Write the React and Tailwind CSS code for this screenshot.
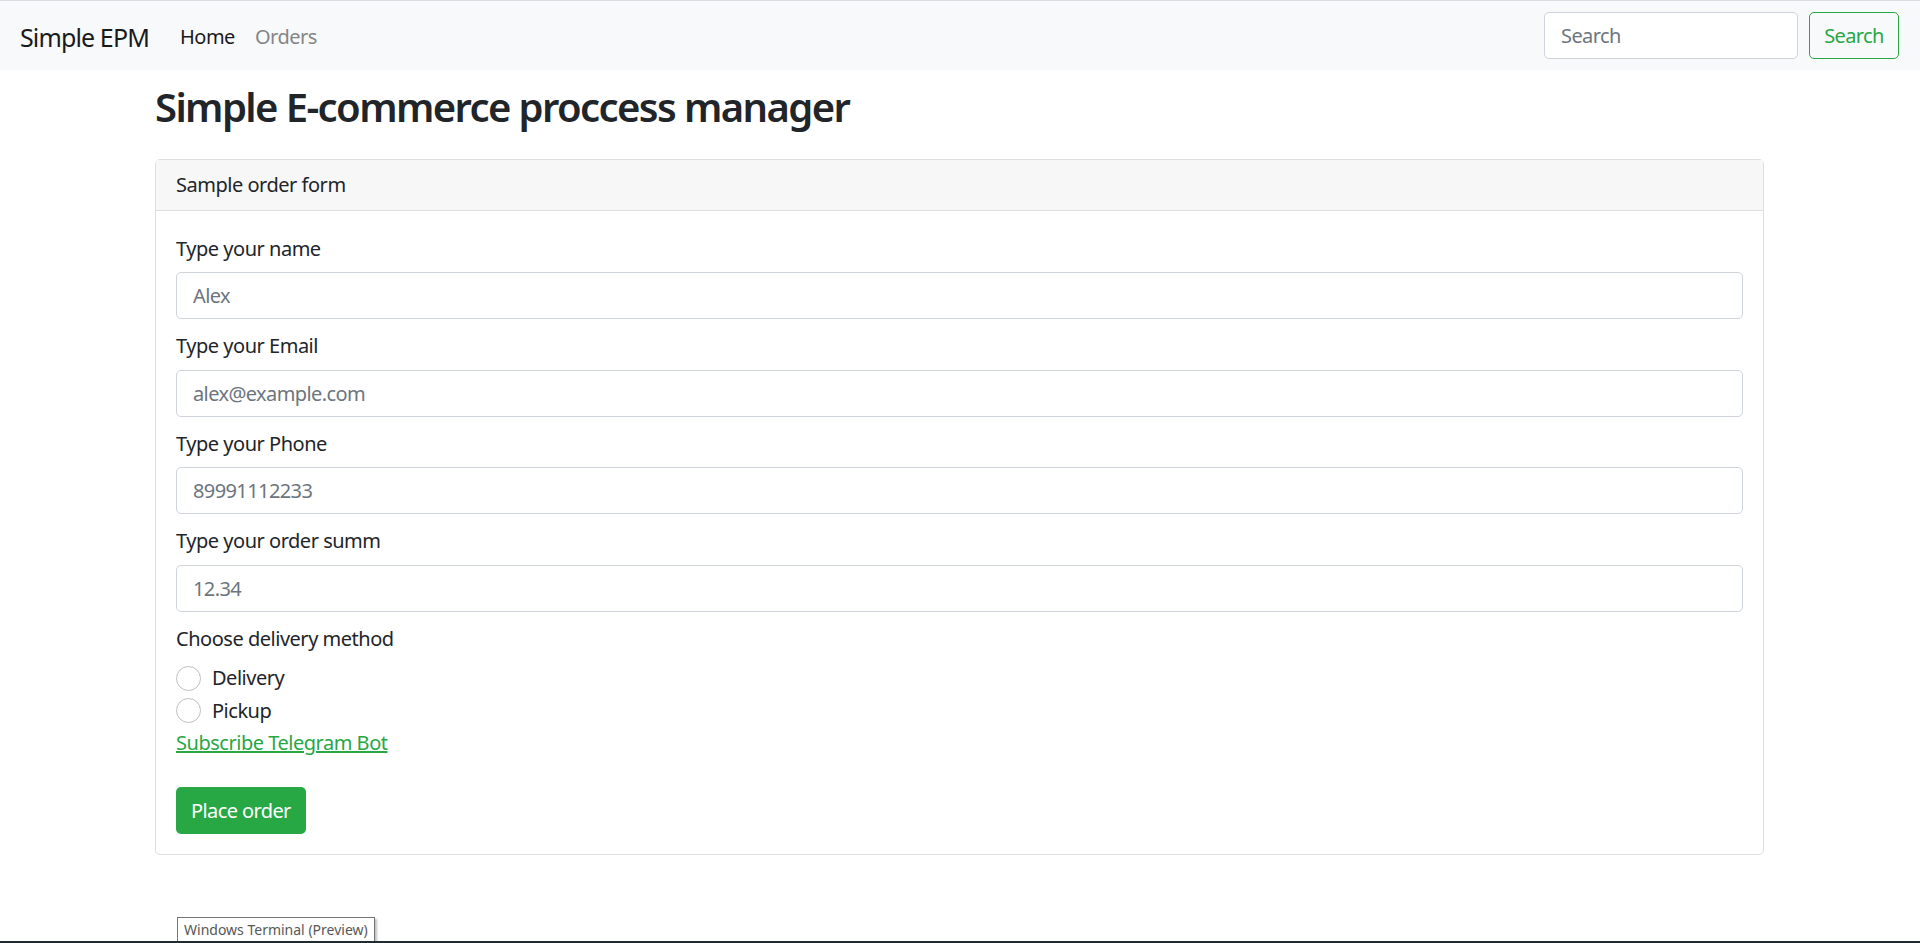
export default function App() {
  const fields = [
    { label: "Type your name", ph: "Alex" },
    { label: "Type your Email", ph: "alex@example.com" },
    { label: "Type your Phone", ph: "89991112233" },
    { label: "Type your order summ", ph: "12.34" },
  ];
  return (
    <div className="relative h-[943px] overflow-hidden bg-white text-[#212529] font-['Noto_Sans',sans-serif] tracking-[-0.03em]">
      <nav className="flex h-[70px] items-center border-t border-[#dadce0] bg-[#f8f9fa] pl-[20px] pr-[21px]">
        <div className="mt-[2px] flex items-center">
          <span className="mr-[21px] text-[25px] leading-[30px] tracking-[-0.035em] text-[#1a1a1a]">Simple EPM</span>
          <a className="px-[10px] text-[20px] leading-[30px] text-[#1a1a1a]">Home</a>
          <a className="px-[10px] text-[20px] leading-[30px] text-[#858585]">Orders</a>
        </div>
        <div className="ml-auto flex items-center">
          <input
            className="h-[47px] w-[254px] rounded-[5px] border border-[#ced4da] bg-white px-[16px] text-[20px] tracking-[-0.03em] outline-none placeholder:text-[#6c757d]"
            placeholder="Search"
          />
          <button className="ml-[11px] h-[47px] w-[90px] rounded-[5px] border border-[#28a745] text-[20px] tracking-[-0.03em] text-[#28a745]">
            Search
          </button>
        </div>
      </nav>
      <main className="pl-[155px] pr-[156px]">
        <h1 className="mt-[13px] text-[40px] font-semibold leading-[48px] tracking-[-0.04em]">
          Simple E-commerce proccess manager
        </h1>
        <div className="mt-[28px] rounded-[5px] border border-[#dfdfdf]">
          <div className="border-b border-[#dfdfdf] bg-[#f7f7f7] px-[20px] py-[10px] text-[20px] leading-[30px]">
            Sample order form
          </div>
          <div className="px-[20px] pb-[20px] pt-[21px] text-[20px]">
            {fields.map((f) => (
              <div key={f.label} className="mb-[10.5px]">
                <label className="mb-[8.5px] block pt-[1.5px] leading-[30px]">{f.label}</label>
                <input
                  className="block h-[47px] w-full rounded-[5px] border border-[#ced4da] bg-white px-[16px] text-[20px] tracking-[-0.03em] outline-none placeholder:text-[#6c757d]"
                  placeholder={f.ph}
                />
              </div>
            ))}
            <div className="pt-[1.5px] leading-[30px]">Choose delivery method</div>
            <div className="mt-[9.5px] flex flex-col">
              {["Delivery", "Pickup"].map((r) => (
                <label key={r} className="mb-[2.5px] flex h-[30px] items-center">
                  <span className="h-[25px] w-[25px] rounded-full border border-[#bfbfbf] bg-white" />
                  <span className="ml-[11px] leading-[30px]">{r}</span>
                </label>
              ))}
            </div>
            <a className="block leading-[30px] text-[#28a745] underline">Subscribe Telegram Bot</a>
            <button className="mt-[29px] h-[47px] rounded-[5px] bg-[#28a745] px-[15px] text-[20px] tracking-[-0.03em] text-white">
              Place order
            </button>
          </div>
        </div>
      </main>
      <div className="absolute left-[177px] top-[917px] flex h-[25px] items-center border border-[#767676] bg-white px-[6px] text-[14px] tracking-normal text-[#575757] shadow-[2px_2px_2px_rgba(0,0,0,0.25)]">
        Windows Terminal (Preview)
      </div>
      <div className="absolute bottom-0 left-0 right-0 h-[2px] bg-[#1e2b30]" />
    </div>
  );
}
